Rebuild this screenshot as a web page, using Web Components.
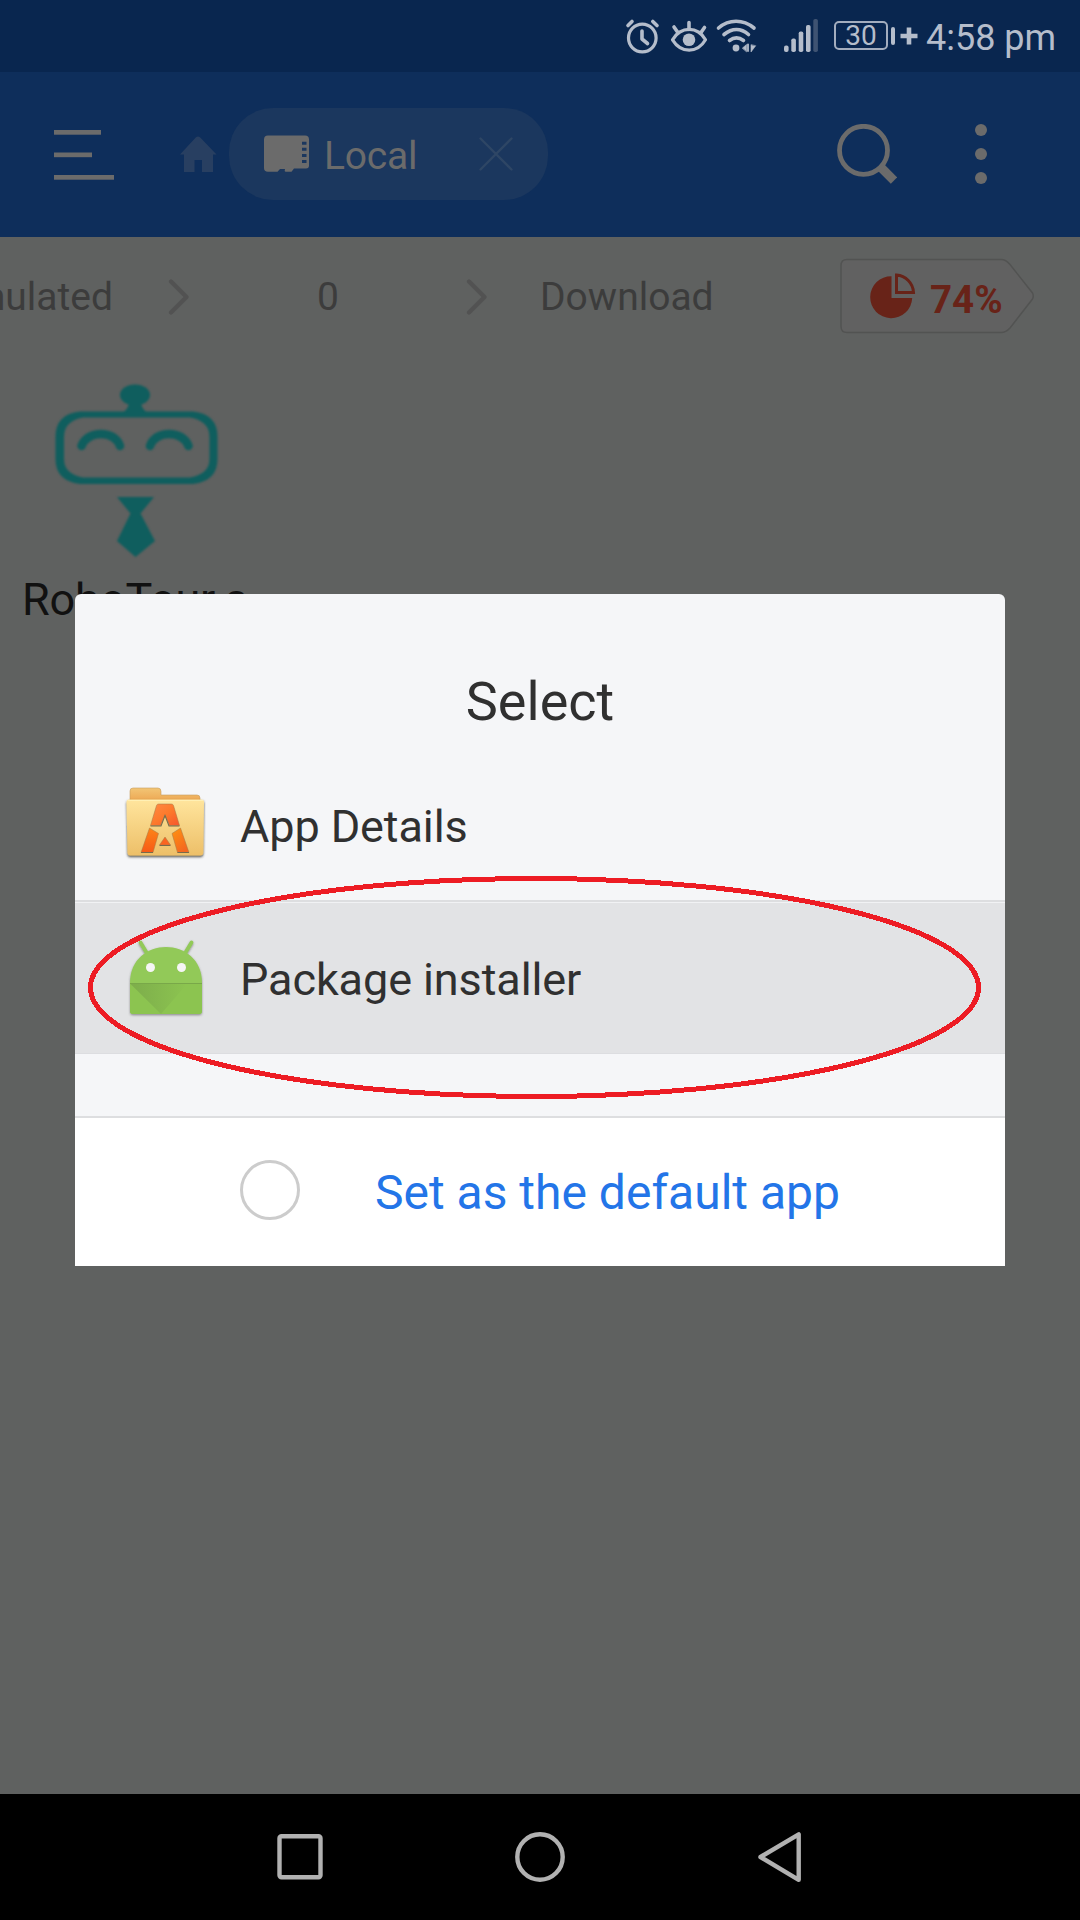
<!DOCTYPE html>
<html lang="en">
<head>
<meta charset="utf-8">
<title>File manager</title>
<style>
html,body{margin:0;padding:0;background:#000}
body{width:1080px;height:1920px;overflow:hidden;font-family:Roboto,"Noto Sans",sans-serif}
</style>
</head>
<body>
<phone-screen>
  <status-bar time="4:58 pm" battery="30"></status-bar>
  <app-bar>Local</app-bar>
  <path-bar usage="74%"></path-bar>
  <file-grid><file-item>RoboTour.a</file-item></file-grid>
  <nav-bar slot="nav"></nav-bar>
  <select-dialog slot="overlay" heading="Select">
    <app-choice><folder-icon slot="icon"></folder-icon>App Details</app-choice>
    <app-choice active><droid-icon slot="icon"></droid-icon>Package installer</app-choice>
    <default-toggle slot="footer">Set as the default app</default-toggle>
  </select-dialog>
  <highlight-ring slot="overlay"></highlight-ring>
</phone-screen>
<script>
const define = (name, html) => customElements.define(name, class extends HTMLElement {
  constructor() {
    super();
    const t = document.createElement('template');
    t.innerHTML = '<style>:host,*{box-sizing:border-box}svg{display:block;flex:none}</style>' +
      html.replace(/\{\{(\w+)\}\}/g, (m, k) => this.getAttribute(k) || '');
    this.attachShadow({mode: 'open'}).appendChild(t.content.cloneNode(true));
  }
});

define('phone-screen', `
<style>
:host{display:flex;flex-direction:column;position:relative;width:1080px;height:1920px;background:#5f6160;overflow:hidden}
main{flex:1;min-height:0;display:flex;flex-direction:column}
</style>
<main><slot></slot></main><slot name="nav"></slot><slot name="overlay"></slot>`);

define('status-bar', `
<style>
:host{display:flex;align-items:flex-start;justify-content:flex-end;height:72px;flex:none;background:#09264f;color:#b5bdcb;padding-right:24px}
.time{font-size:36px;line-height:72px;padding-top:2px;width:130px;white-space:nowrap}
.bat{display:flex;align-items:center;margin:21px 8px 0 15px;height:29px}
.cell{width:54px;height:29px;border:2px solid #a3adbe;border-radius:5px;font-size:28px;line-height:26px;text-align:center}
.nub{width:4px;height:18px;border-radius:2px;background:#b5bdcb;margin:0 5px 0 3px}
</style>
<svg width="194" height="72" viewBox="625 0 194 72" fill="none" stroke="#b5bdcb" stroke-linecap="round">
  <circle cx="642.3" cy="38" r="13.8" stroke-width="3.2"/>
  <path d="M642 31v8l5.500 4.500" stroke-width="3.600" stroke-linejoin="round"/>
  <path d="M628 25.500l4-4M652.800 21.500l4.200 4" stroke-width="3.600"/>
  <path d="M672.500 39.800C681 26 697.500 26 705.500 39.800C697.500 53.500 681 53.500 672.500 39.800Z" stroke-width="3.200" stroke-linejoin="round"/>
  <circle cx="689" cy="39.700" r="6.300" fill="#b5bdcb" stroke="none"/>
  <path d="M689 22.500v7M674 27l3.500 5M704.500 27.500l-3.500 5" stroke-width="3.600"/>
  <path d="M718.500 28C729 19 743 19 754 28M724 34.500C732 28 741 28 748.500 34.500M729.500 40.500C734 37 739 37 743.500 40.500" stroke-width="3.600"/>
  <circle cx="736" cy="48" r="3.400" fill="#b5bdcb" stroke="none"/>
  <path d="M742.500 48l4-3.500v7zM755.500 46l-4.500 6v-7z" fill="#b5bdcb" stroke="#b5bdcb" stroke-width=".6"/><path d="M748 44.500v6.500" stroke-width="1.800"/>
  <g stroke="none" fill="#b5bdcb">
    <rect x="784" y="45.500" width="4.600" height="6.500" rx="2"/><rect x="791.300" y="38.500" width="4.600" height="13.500" rx="1.800"/>
    <rect x="798.700" y="31.500" width="4.600" height="20.500" rx="1.800"/><rect x="806" y="25" width="4.600" height="27" rx="1.800"/>
    <rect x="813.300" y="19" width="4.600" height="33" rx="1.800" fill="#3f5372"/>
  </g>
</svg>
<div class="bat"><div class="cell">{{battery}}</div><div class="nub"></div>
<svg width="18" height="18"><path d="M9 .5v17M.5 9h17" stroke="#b5bdcb" stroke-width="4.600"/></svg></div>
<div class="time">{{time}}</div>`);

define('app-bar', `
<style>
:host{display:flex;align-items:center;height:165px;flex:none;background:#0e2e5b;color:#6b6b6b;padding:0 92px 1px 54px}
.menu{margin:2px 65px 0 0}
.pill{display:flex;align-items:center;width:319px;height:92px;margin-left:12px;border-radius:44px;background:#1b375e;padding:0 35px}
.label{font-size:39px;line-height:46px;letter-spacing:-.2px;margin:3px 0 0 15px;flex:1}
.search{margin-left:auto}
.more{margin-left:77px}
</style>
<svg class="menu" width="61" height="50" fill="#6b6b6b"><rect y="0" width="47" height="4.700"/><rect y="22.500" width="38" height="4.700"/><rect y="45" width="60" height="4.700"/></svg>
<svg width="37" height="36" fill="#283f61"><path d="M16 1.300Q18 -.5 20 1.300L36.500 18.500H33V36H22V24H14.500V36H4V18.500H0Z"/></svg>
<div class="pill">
<svg width="45" height="38" viewBox="0 0 45 38"><path fill="#6b6b6b" fill-rule="evenodd" d="M4 .5H41Q45 .5 45 4.500V30.500Q45 33.500 42 33.500H30L27.500 36.800H22Q20.500 36.800 20.700 35.500L21 34H16L13.500 36.800H4Q0 36.800 0 33V4.500Q0 .5 4 .5ZM38 6.700V9.700H42.500V6.700ZM38 12.800V15.800H42.500V12.800ZM38 19V22H42.500V19ZM38 25V28H42.500V25Z"/></svg>
<span class="label"><slot></slot></span>
<svg width="34" height="34" stroke="#2e4665" stroke-width="2.400" fill="none" stroke-linecap="round"><path d="M1.500 1.500L32.500 32.500M32.500 1.500L1.500 32.500"/></svg>
</div>
<svg class="search" width="60" height="60" fill="none" stroke="#6b6b6b"><circle cx="26.500" cy="26.300" r="24" stroke-width="4.800"/><path d="M42.500 42L57 56.500" stroke-width="9"/></svg>
<svg class="more" width="14" height="62" fill="#6b6b6b"><circle cx="7" cy="7" r="6"/><circle cx="7" cy="31" r="6"/><circle cx="7" cy="55" r="6"/></svg>`);

define('path-bar', `
<style>
:host{display:flex;align-items:center;height:119px;flex:none;font-size:39px;line-height:46px;color:#3c3c3c}
.c{white-space:nowrap}
.a{width:113px;display:flex;justify-content:flex-end;overflow:hidden}
.sep{margin-left:55px}
.z{width:277px;display:flex;justify-content:center;padding-left:1px}
.d{width:245px;padding-left:53px}
.tag{position:relative;display:flex;align-items:center;width:196px;height:76px;margin:-1px 0 0 108px;padding:0 0 0 30px;color:#682318;font-weight:700}
.tag>svg:first-child{position:absolute;left:0;top:0}
.tag svg,.tag span{z-index:1}
.tag span{font-size:38.500px;margin:7px 0 0 14px}
</style>
<span class="c a">mulated</span>
<svg class="sep" width="21" height="36" fill="none" stroke="#525252" stroke-width="4.200" stroke-linecap="round" stroke-linejoin="round"><path d="M3 2.500L18.500 18L3 33.500"/></svg>
<span class="c z">0</span>
<svg width="21" height="36" fill="none" stroke="#525252" stroke-width="4.200" stroke-linecap="round" stroke-linejoin="round"><path d="M3 2.500L18.500 18L3 33.500"/></svg>
<span class="c d">Download</span>
<div class="tag">
<svg width="196" height="76"><path d="M7 1.500H161Q166 1.500 170 6.500L192.500 35Q194 38 192.500 41L170 70Q166 74.500 161 74.500H7Q1 74.500 1 68.500V7.500Q1 1.500 7 1.500Z" fill="#616161" stroke="#525352" stroke-width="1.500"/></svg>
<svg width="46" height="46" viewBox="0 0 46 46" fill="#682318"><path d="M21.500 3.200A21 21 0 1 0 42.200 25H21.500Z"/><path d="M26.500 2A18.500 18.500 0 0 1 43.500 19.500H26.500Z" fill="none" stroke="#682318" stroke-width="3"/></svg>
<span>{{usage}}</span></div>`);

define('file-grid', `<style>:host{display:flex;padding:28px 0 0 22px}</style><slot></slot>`);
define('file-item', `
<style>:host{display:flex;flex-direction:column;width:230px;font-size:45px;line-height:54px;color:#111}
svg{margin-left:30px}
.n{margin-top:16px;white-space:nowrap;letter-spacing:-.2px}
</style>
<svg width="170" height="173" viewBox="52 384 170 173" style="filter:blur(.9px)" fill="#0f5e5e">
<ellipse cx="135" cy="395" rx="15" ry="10.500"/><path d="M129 402H141Q141 409 148 413H122Q129 409 129 402Z"/>
<path fill-rule="evenodd" d="M80 411.500H193Q217.500 414 217.500 437V459Q217.500 481 193 484H80Q55.500 481 55.500 459V437Q55.500 414 80 411.500ZM83 417.500Q64 421 64 437V459Q64 474 83 477.500H190Q209.500 474 209.500 459V437Q209.500 421 190 417.500Z"/>
<path fill="none" stroke="#0f5e5e" stroke-width="8.500" stroke-linecap="round" d="M81.500 446C87 430 115 430 120 446M150 446C155 430 183 430 188.500 446"/>
<path d="M117 497H154L140.500 513.500L155 541L135.500 557L117 541L130.500 513.500Z"/></svg>
<span class="n"><slot></slot></span>`);

define('nav-bar', `
<style>:host{display:flex;height:126px;flex:none;align-items:center;justify-content:center;background:#000;gap:189px}</style>
<svg width="52" height="52" fill="none" stroke="#b1b1b1" stroke-width="4.400"><rect x="6.500" y="5.200" width="41" height="41" rx="2"/></svg>
<svg width="52" height="52" fill="none" stroke="#b1b1b1" stroke-width="4.400"><circle cx="26" cy="26" r="22.700"/></svg>
<svg width="52" height="52" fill="none" stroke="#b1b1b1" stroke-width="4.400" stroke-linejoin="round"><path d="M43.700 3.300V48.800L5.500 26Z"/></svg>`);

define('select-dialog', `
<style>
:host{position:absolute;left:75px;top:594px;width:930px;height:672px;background:#f5f6f8;border-radius:6px 6px 0 0;display:flex;flex-direction:column;color:#303030}
h1{margin:0;font-size:54px;font-weight:400;line-height:64px;text-align:center;padding-top:76px;height:155px}
.foot{margin-top:auto}
</style>
<h1>{{heading}}</h1><slot></slot><div class="foot"><slot name="footer"></slot></div>`);

define('app-choice', `
<style>
:host{display:flex;align-items:center;height:153px;padding-left:46px;font-size:45px;line-height:54px;letter-spacing:-.1px;border-bottom:2px solid #dddee0;white-space:nowrap}
:host([active]){height:152px;background:#e2e3e5;border-top:1px solid #f1f2f4;border-bottom:1px solid #dcdde0}
.t{margin-left:29px;padding-top:4px}
</style>
<slot name="icon"></slot><span class="t"><slot></slot></span>`);

define('folder-icon', `
<style>:host{display:block;margin-top:-3px}</style>
<svg width="90" height="80" viewBox="121 783 90 80">
<defs><linearGradient id="b" x2="0" y2="1"><stop stop-color="#ffe59d"/><stop offset="1" stop-color="#edbf68"/></linearGradient>
<linearGradient id="t" x2="0" y2="1"><stop stop-color="#f2c575"/><stop offset="1" stop-color="#eda550"/></linearGradient>
<linearGradient id="a" x2="1" y2="1"><stop stop-color="#ff8a45"/><stop offset=".5" stop-color="#fd7a2c"/><stop offset="1" stop-color="#f6562c"/></linearGradient>
<linearGradient id="l" x2="0" y2="1"><stop stop-color="#fd8418"/><stop offset="1" stop-color="#f75a16"/></linearGradient>
<linearGradient id="r" x2=".6" y2="1"><stop stop-color="#ff9411"/><stop offset="1" stop-color="#f46720"/></linearGradient>
<filter id="s" x="-20%" y="-20%" width="140%" height="150%"><feDropShadow dx="0" dy="1.500" stdDeviation="1" flood-color="#30302c" flood-opacity=".85"/></filter></defs>
<path d="M130 802V791Q130 788 133 788H158Q161 788 161 791.500V795H197Q200 795 200 798V802Z" fill="url(#t)" stroke="#c79e60" stroke-width=".6"/>
<path d="M128.500 799.500H201.500Q204 799.500 204 802L203.300 853Q203 855.500 200.500 855.500H130Q127.700 855.500 127.500 853L126.500 802Q126.500 799.500 128.500 799.500Z" fill="url(#b)" filter="url(#s)"/>
<path d="M127.500 800.500H203" stroke="#fff0b5" stroke-width="1"/>
<g stroke="#a07a48" stroke-width=".5"><path d="M158.500 804H171.500Q173 804 173.500 805.500L179.500 825.500H169.500L165 815L160.500 825.500H150.500L156.500 805.500Q157 804 158.500 804Z" fill="url(#a)"/>
<path d="M149.500 828L158.500 833.500L153 852.500H141Z" fill="url(#l)"/><path d="M180.500 828L172 833.500L177.500 852.500H189Z" fill="url(#r)"/>
<path d="M165 837L170.500 845H159.500Z" fill="#fa6420"/></g>
<path d="M150.500 826H161L165 815.500L169 826H179.500M141 852.500H153M177.500 852.500H189M159.500 845.500H170.500" fill="none" stroke="#776b4c" stroke-width="1.100"/>
</svg>`);

define('droid-icon', `
<style>:host{display:block;margin-top:-2px}</style>
<svg width="90" height="84" viewBox="120 935 90 84">
<defs><linearGradient id="g" x2="1"><stop stop-color="#7dad4b"/><stop offset="1" stop-color="#8cc450"/></linearGradient>
<filter id="s" x="-20%" y="-20%" width="140%" height="140%"><feDropShadow dx="0" dy="1.200" stdDeviation=".9" flood-color="#444" flood-opacity=".55"/></filter></defs>
<g filter="url(#s)" fill="#92c958"><path d="M139.500 942.500L147 955M190.500 942.500L183 955" stroke="#92c958" stroke-width="3.800" stroke-linecap="round"/>
<path d="M129 983C129 935 201 935 201 983V1011Q201 1014 198 1014H132Q129 1014 129 1011Z"/></g>
<path d="M129 983H201V1011Q201 1014 198 1014H132Q129 1014 129 1011Z" fill="#8cc450"/>
<path d="M129.500 984H186L160 1014Z" fill="url(#g)"/><path d="M129 983.500H201" stroke="#79a849" stroke-width="1"/>
<circle cx="149.500" cy="967.500" r="4.500" fill="#f5f5f5"/><circle cx="180.500" cy="967.500" r="4.500" fill="#f5f5f5"/></svg>`);

define('default-toggle', `
<style>
:host{display:flex;align-items:center;height:150px;border-top:2px solid #dddee0;background:#fff;color:#2375e8;font-size:48px;line-height:56px;padding-left:165px;white-space:nowrap}
i{width:60px;height:60px;border:3px solid #ccc;border-radius:50%;margin-bottom:4px}
span{margin-left:75px;padding-top:1px}
</style>
<i></i><span><slot></slot></span>`);

define('highlight-ring', `
<style>:host{position:absolute;left:88px;top:876px;width:893px;height:223px;pointer-events:none}</style>
<svg width="893" height="223"><ellipse cx="446.500" cy="111.500" rx="444" ry="109" fill="none" stroke="#ed1c24" stroke-width="5" shape-rendering="crispEdges"/></svg>`);
</script>
</body>
</html>
